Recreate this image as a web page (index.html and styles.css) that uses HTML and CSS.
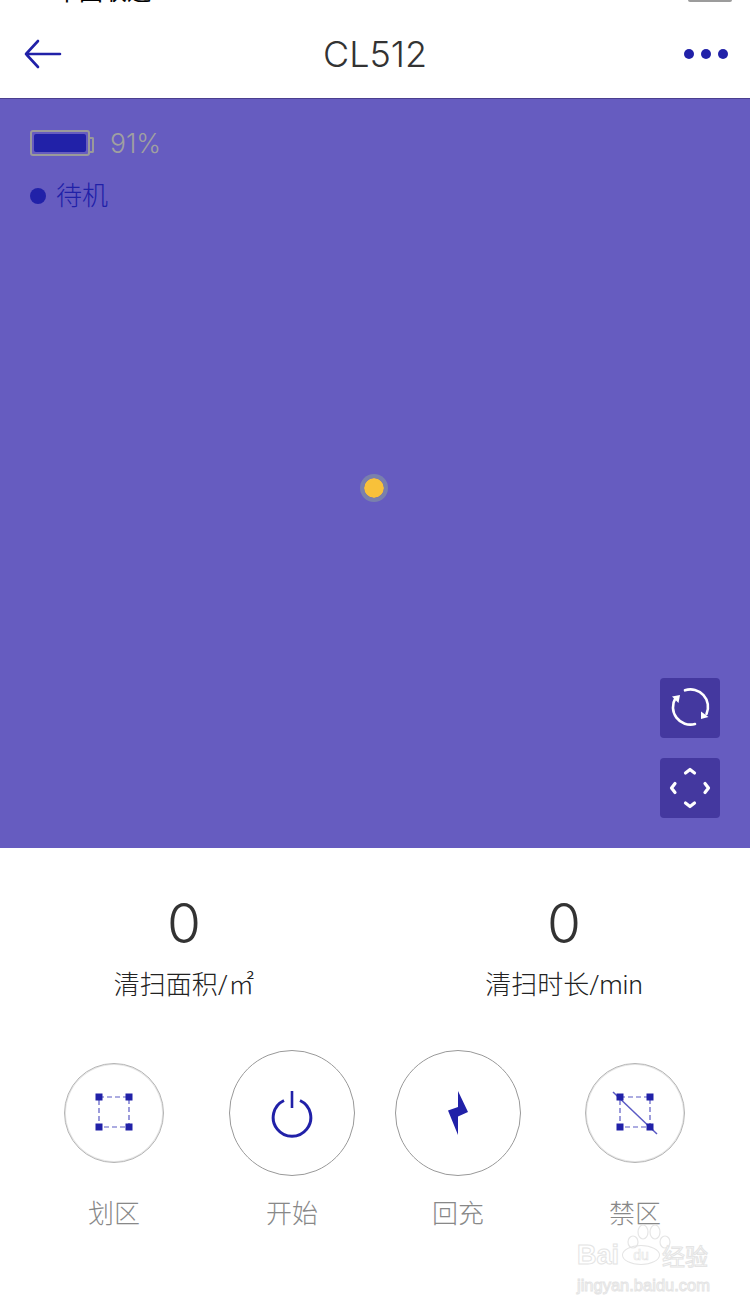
FILE: index.html

```html
<!DOCTYPE html>
<html lang="zh-CN">
<head>
    <meta charset="UTF-8">
    <title>CL512</title>
    <link rel="stylesheet" href="styles.css">
</head>
<body>
    <div class="status-bar">
        <span class="carrier">中国联通</span>
        <span class="phone-battery"></span>
    </div>
    <header class="nav">
        <svg class="back" width="38" height="30" viewBox="0 0 38 30">
            <path d="M36 15H2M14 2L2 15l12 13" fill="none" stroke="#2121a8" stroke-width="2.6" stroke-linecap="round" stroke-linejoin="round"/>
        </svg>
        <h1 class="title">CL512</h1>
        <div class="more"><i></i><i></i><i></i></div>
    </header>

    <section class="map">
        <div class="battery-row">
            <div class="battery"><div class="battery-fill"></div></div>
            <span class="battery-text">91%</span>
        </div>
        <div class="state-row">
            <i class="state-dot"></i>
            <span class="state-text">待机</span>
        </div>
        <div class="robot"></div>
        <div class="map-btn map-btn-rotate">
            <svg width="44" height="44" viewBox="0 0 44 44" fill="none" stroke="#fff" stroke-width="2.6" stroke-linecap="round">
                <path d="M17 4.300A17.500 17.500 0 0 1 38.500 28"/>
                <path d="M27 38A17.500 17.500 0 0 1 7.500 12"/>
                <path d="M4 10.500l8-1.500-1.500 8z" fill="#fff" stroke="none"/>
                <path d="M33 25.500l7.500 5.500-7.500 2z" fill="#fff" stroke="none"/>
            </svg>
        </div>
        <div class="map-btn map-btn-fit">
            <svg width="44" height="44" viewBox="0 0 44 44" fill="none" stroke="#fff" stroke-width="3.200" stroke-linecap="round" stroke-linejoin="round">
                <path d="M17.500 7l4.500-3.500 4.500 3.500"/>
                <path d="M17.500 37l4.500 3.500 4.500-3.500"/>
                <path d="M7 17.500L3.500 22l3.500 4.500"/>
                <path d="M37 17.500l3.500 4.500-3.500 4.500"/>
            </svg>
        </div>
    </section>

    <section class="stats">
        <div class="stat">
            <div class="stat-num">0</div>
            <div class="stat-label">清扫面积/㎡</div>
        </div>
        <div class="stat">
            <div class="stat-num">0</div>
            <div class="stat-label">清扫时长/min</div>
        </div>
    </section>

    <section class="actions">
        <div class="action">
            <div class="circle">
                <svg width="50" height="50" viewBox="0 0 50 50">
                    <rect x="10" y="9" width="30" height="30" fill="none" stroke="#5a5ac4" stroke-width="1.200" stroke-dasharray="5 3"/>
                    <path d="M6.500 5.500h7v7h-7zM36.500 5.500h7v7h-7zM6.500 35.500h7v7h-7zM36.500 35.500h7v7h-7z" fill="#2121a8"/>
                </svg>
            </div>
            <span class="action-label">划区</span>
        </div>
        <div class="action action-big">
            <div class="circle">
                <svg width="44" height="50" viewBox="0 0 44 50" fill="none" stroke="#2121a8">
                    <path d="M14 12.500a18.800 18.800 0 1 0 16 0" stroke-width="3"/>
                    <path d="M22 3v17" stroke-width="2.600"/>
                </svg>
            </div>
            <span class="action-label">开始</span>
        </div>
        <div class="action action-big">
            <div class="circle">
                <svg width="24" height="44" viewBox="0 0 24 44">
                    <path d="M12 0l10 21-10 4.500V44L2 19.500l10-3.500z" fill="#2121a8"/>
                </svg>
            </div>
            <span class="action-label">回充</span>
        </div>
        <div class="action">
            <div class="circle">
                <svg width="50" height="50" viewBox="0 0 50 50">
                    <rect x="10" y="9" width="30" height="30" fill="none" stroke="#5a5ac4" stroke-width="1.200" stroke-dasharray="5 3"/>
                    <path d="M3 4l44 42" stroke="#5a5ac4" stroke-width="1.500"/>
                    <path d="M6.500 5.500h7v7h-7zM36.500 5.500h7v7h-7zM6.500 35.500h7v7h-7zM36.500 35.500h7v7h-7z" fill="#2121a8"/>
                </svg>
            </div>
            <span class="action-label">禁区</span>
        </div>
    </section>

    <div class="watermark">
        <svg class="paw" width="44" height="26" viewBox="0 0 44 26" fill="#fff" stroke="#e6e6e6" stroke-width="1.200">
            <ellipse cx="6" cy="18" rx="5" ry="6"/>
            <ellipse cx="16" cy="8" rx="5" ry="7"/>
            <ellipse cx="28" cy="8" rx="5" ry="7"/>
            <ellipse cx="38" cy="18" rx="5" ry="6"/>
        </svg>
        <div class="wm-top">
            <span class="wm-bai">Bai</span>
            <span class="wm-du">du</span>
            <span class="wm-jy">经验</span>
        </div>
        <div class="wm-url">jingyan.baidu.com</div>
    </div>
</body>
</html>
```

FILE: styles.css

```css
* {
    box-sizing: border-box;
}
body {
    margin: 0;
    width: 750px;
    height: 1304px;
    position: relative;
    overflow: hidden;
    background: #ffffff;
    font-family: Roboto, "Noto Sans CJK SC", sans-serif;
    color: #333333;
}

.status-bar {
    height: 3px;
    overflow: hidden;
    display: flex;
    justify-content: space-between;
    align-items: flex-end;
    padding: 0 18px 0 55px;
}
.carrier {
    font-size: 24px;
    line-height: 24px;
    flex-shrink: 0;
    color: #000000;
    margin-bottom: -1px;
}
.phone-battery {
    width: 44px;
    height: 2px;
    align-self: flex-start;
    background: #9c9c9c;
    border-radius: 0 0 5px 5px;
}

.nav {
    height: 96px;
    border-bottom: 1px solid #4a3f8f;
    display: flex;
    align-items: center;
    justify-content: space-between;
    padding: 6px 22px 0 24px;
}
.title {
    margin: 0;
    font-family: Inter, sans-serif;
    font-size: 36px;
    font-weight: 300;
    color: #333333;
    position: absolute;
    left: 0;
    right: 0;
    text-align: center;
}
.more {
    display: flex;
    gap: 7px;
}
.more i {
    width: 10px;
    height: 10px;
    border-radius: 50%;
    background: #2121a8;
}

.map {
    height: 749px;
    background: #665cc0;
    position: relative;
    padding: 31px 30px 0;
}
.battery-row {
    display: flex;
    align-items: center;
    gap: 20px;
    height: 26px;
}
.battery {
    width: 60px;
    height: 26px;
    border: 2px solid #9a9a9a;
    border-radius: 3px;
    padding: 2px;
    position: relative;
}
.battery::after {
    content: "";
    position: absolute;
    right: -6px;
    top: 5px;
    width: 4px;
    height: 12px;
    border: 2px solid #9a9a9a;
    border-left: none;
    border-radius: 0 2px 2px 0;
}
.battery-fill {
    height: 100%;
    background: #2121a8;
    border-radius: 2px;
}
.battery-text {
    font-family: Inter, sans-serif;
    font-size: 26.500px;
    font-weight: 300;
    color: #a0a0a0;
}
.state-row {
    display: flex;
    align-items: center;
    gap: 10px;
    margin-top: 22px;
    height: 36px;
}
.state-dot {
    width: 16px;
    height: 16px;
    border-radius: 50%;
    background: #2121a8;
}
.state-text {
    font-size: 26px;
    font-weight: 300;
    line-height: 36px;
    color: #2020a8;
}

.robot {
    position: absolute;
    left: 360px;
    top: 375px;
    width: 28px;
    height: 28px;
    border-radius: 50%;
    background: #f8c13a;
    background-clip: content-box;
    padding: 4px;
    box-shadow: inset 0 0 0 4px #7a80ac;
}
.map-btn {
    position: absolute;
    right: 30px;
    width: 60px;
    height: 60px;
    background: #44389f;
    border-radius: 4px;
    display: flex;
    align-items: center;
    justify-content: center;
}
.map-btn-rotate {
    top: 579px;
}
.map-btn-fit {
    top: 659px;
}

.stats {
    display: grid;
    grid-template-columns: 320px 320px;
    column-gap: 60px;
    padding: 43px 0 0 24px;
    text-align: center;
}
.stat-num {
    font-family: Inter, sans-serif;
    font-size: 55px;
    font-weight: 300;
    line-height: 64px;
    color: #333333;
}
.stat-label {
    margin-top: 12px;
    font-size: 26px;
    font-weight: 300;
    line-height: 36px;
    color: #222222;
}

.actions {
    display: flex;
    padding: 47px 0 0 64px;
}
.action {
    width: 100px;
    display: flex;
    flex-direction: column;
    align-items: center;
    padding-top: 13px;
}
.action .circle {
    width: 100px;
    height: 100px;
    border-radius: 50%;
    border: 1px solid #b4b4b4;
    box-shadow: inset 0 0 0 1px #e6e6e6;
    display: flex;
    align-items: center;
    justify-content: center;
}
.action-big {
    width: 126px;
    padding-top: 0;
    margin-left: 65px;
}
.action-big + .action-big {
    margin-left: 40px;
}
.action-big + .action:not(.action-big) {
    margin-left: 64px;
}
.action-big .circle {
    width: 126px;
    height: 126px;
    border: 1px solid #999999;
    box-shadow: none;
}
.action-label {
    margin-top: 20px;
    font-size: 26px;
    font-weight: 300;
    line-height: 36px;
    color: #888888;
}
.action:not(.action-big) .action-label {
    margin-top: 33px;
}

.watermark {
    position: absolute;
    left: 577px;
    top: 1224px;
    width: 134px;
    color: #ffffff;
    -webkit-text-stroke: 1px #e4e4e4;
    font-family: "Liberation Sans", sans-serif;
}
.paw {
    display: block;
    margin-left: 50px;
}
.wm-top {
    display: flex;
    align-items: center;
    margin-top: -8px;
    white-space: nowrap;
}
.wm-bai {
    font-size: 27px;
    line-height: 26px;
    font-weight: 700;
    width: 45px;
}
.wm-du {
    width: 38px;
    height: 20px;
    border-radius: 50%;
    border: 1px solid #e4e4e4;
    font-size: 14px;
    line-height: 18px;
    text-align: center;
    -webkit-text-stroke: 0.6px #e4e4e4;
}
.wm-jy {
    font-family: "Noto Sans CJK SC", sans-serif;
    font-size: 23px;
    line-height: 26px;
    margin-left: 2px;
}
.wm-url {
    font-size: 16.500px;
    line-height: 20px;
    white-space: nowrap;
    margin-top: 7px;
}
```
